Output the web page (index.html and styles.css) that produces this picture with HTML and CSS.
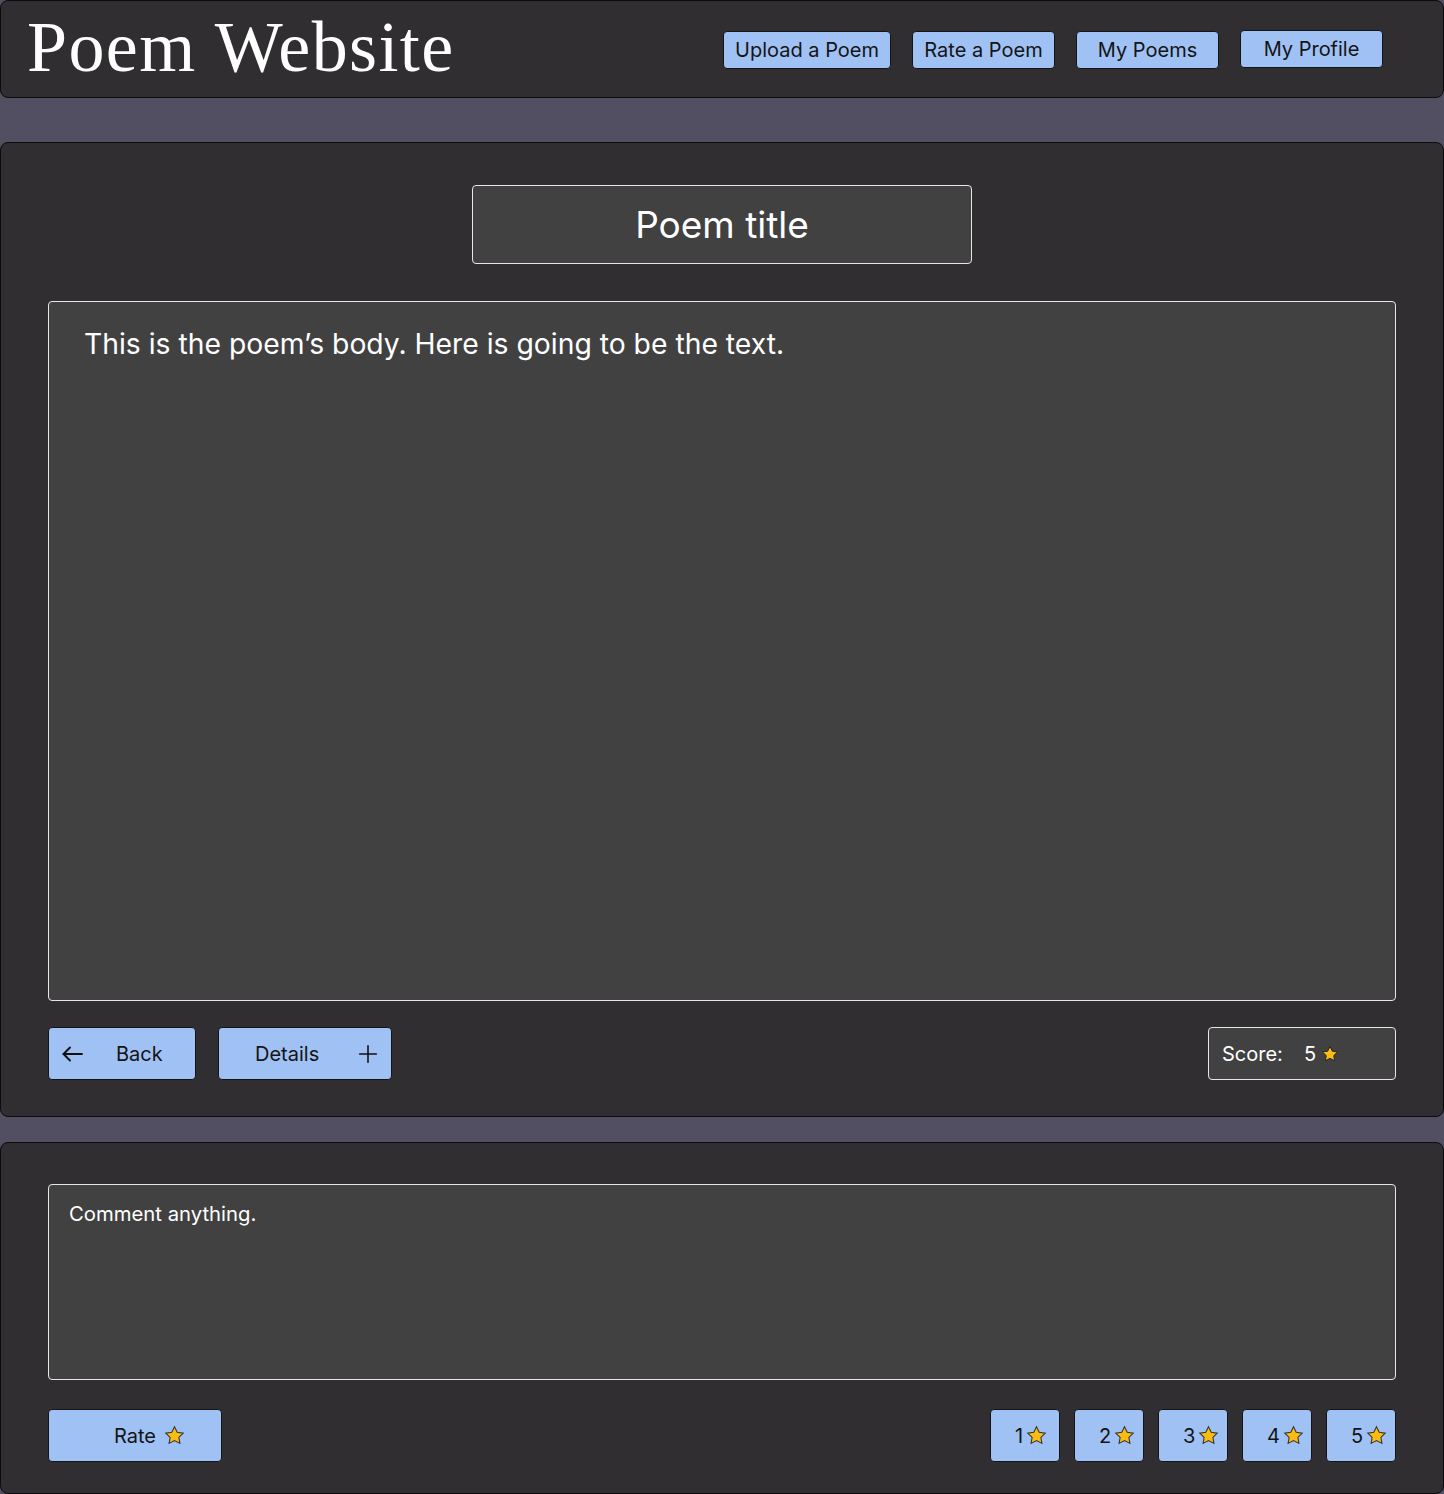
FILE: index.html
```html
<!DOCTYPE html>
<html>
<head>
<meta charset="utf-8">
<link rel="stylesheet" href="styles.css">
</head>
<body>
<header class="header">
  <h1 class="logo">Poem Website</h1>
  <nav class="nav">
    <a class="nav-btn nav-btn-wide">Upload a Poem</a>
    <a class="nav-btn">Rate a Poem</a>
    <a class="nav-btn">My Poems</a>
    <a class="nav-btn nav-btn-up">My Profile</a>
  </nav>
</header>

<section class="card poem-card">
  <div class="title-box">Poem title</div>
  <div class="body-box">This is the poem’s body. Here is going to be the text.</div>
  <div class="action-row">
    <div class="left-actions">
      <button class="btn back-btn">
        <svg class="icon" width="24" height="24" viewBox="0 0 24 24" fill="none" stroke="#111" stroke-width="1.9" stroke-linecap="round" stroke-linejoin="round"><path d="M21 12H2.5"/><path d="M9 5.5l-6.5 6.5 6.5 6.5"/></svg>
        <span class="back-label">Back</span>
      </button>
      <button class="btn details-btn">
        <span>Details</span>
        <svg class="icon" width="20" height="20" viewBox="0 0 24 24" fill="none" stroke="#111" stroke-width="1.9" stroke-linecap="round"><path d="M12 2v20"/><path d="M2 12h20"/></svg>
      </button>
    </div>
    <div class="score-box">
      <span class="score-label">Score:</span>
      <span class="score-val">5</span>
      <svg class="star" width="18" height="18" viewBox="0 0 24 24"><polygon points="12,2 15.09,8.26 22,9.27 17,14.14 18.18,21.02 12,17.77 5.82,21.02 7,14.14 2,9.27 8.91,8.26" fill="#fbbc12" stroke="#222" stroke-width="1.3"/></svg>
    </div>
  </div>
</section>

<section class="card comment-card">
  <div class="comment-box">Comment anything.</div>
  <div class="rate-row">
    <button class="btn rate-btn">
      <span>Rate</span>
      <svg class="star" width="21" height="21" viewBox="0 0 24 24"><polygon points="12,2 15.09,8.26 22,9.27 17,14.14 18.18,21.02 12,17.77 5.82,21.02 7,14.14 2,9.27 8.91,8.26" fill="#fbbc12" stroke="#333" stroke-width="1.2"/></svg>
    </button>
    <div class="stars-group">
      <button class="btn num-btn"><span>1</span><svg class="star" width="21" height="21" viewBox="0 0 24 24"><polygon points="12,2 15.09,8.26 22,9.27 17,14.14 18.18,21.02 12,17.77 5.82,21.02 7,14.14 2,9.27 8.91,8.26" fill="#fbbc12" stroke="#333" stroke-width="1.2"/></svg></button>
      <button class="btn num-btn"><span>2</span><svg class="star" width="21" height="21" viewBox="0 0 24 24"><polygon points="12,2 15.09,8.26 22,9.27 17,14.14 18.18,21.02 12,17.77 5.82,21.02 7,14.14 2,9.27 8.91,8.26" fill="#fbbc12" stroke="#333" stroke-width="1.2"/></svg></button>
      <button class="btn num-btn"><span>3</span><svg class="star" width="21" height="21" viewBox="0 0 24 24"><polygon points="12,2 15.09,8.26 22,9.27 17,14.14 18.18,21.02 12,17.77 5.82,21.02 7,14.14 2,9.27 8.91,8.26" fill="#fbbc12" stroke="#333" stroke-width="1.2"/></svg></button>
      <button class="btn num-btn"><span>4</span><svg class="star" width="21" height="21" viewBox="0 0 24 24"><polygon points="12,2 15.09,8.26 22,9.27 17,14.14 18.18,21.02 12,17.77 5.82,21.02 7,14.14 2,9.27 8.91,8.26" fill="#fbbc12" stroke="#333" stroke-width="1.2"/></svg></button>
      <button class="btn num-btn"><span>5</span><svg class="star" width="21" height="21" viewBox="0 0 24 24"><polygon points="12,2 15.09,8.26 22,9.27 17,14.14 18.18,21.02 12,17.77 5.82,21.02 7,14.14 2,9.27 8.91,8.26" fill="#fbbc12" stroke="#333" stroke-width="1.2"/></svg></button>
    </div>
  </div>
</section>
</body>
</html>
```
FILE: styles.css
```css
* { box-sizing: border-box; }

html, body {
  margin: 0;
  padding: 0;
}

body {
  background: #514f61;
  font-family: Inter, "Noto Sans", sans-serif;
  color: #fff;
  width: 1444px;
}

.header {
  height: 98px;
  background: #302e30;
  border: 1px solid #0c0c0c;
  border-radius: 8px;
  display: flex;
  align-items: center;
  justify-content: space-between;
  padding: 0 60px 0 26px;
}

.logo {
  margin: 0;
  font-family: "Liberation Serif", "DejaVu Serif", serif;
  font-weight: 400;
  font-size: 72px;
  line-height: 1;
  color: #fff;
  letter-spacing: 1.4px;
  margin-top: -4px;
}

.nav {
  display: flex;
  gap: 21px;
  align-items: center;
  margin-top: 2px;
}

.nav-btn {
  display: flex;
  align-items: center;
  justify-content: center;
  height: 38px;
  width: 143px;
  padding: 0 11px;
  background: #a0c1f4;
  border: 1px solid #151515;
  border-radius: 4px;
  color: #141414;
  font-size: 20px;
}

.nav-btn-wide { width: 168px; }
.nav-btn-up { margin-top: -2px; }

.card {
  background: #302e30;
  border: 1px solid #0c0c0c;
  border-radius: 8px;
  padding: 0 47px;
}

.poem-card {
  margin-top: 44px;
  padding-top: 42px;
  padding-bottom: 36px;
}

.title-box {
  width: 500px;
  height: 79px;
  margin: 0 auto;
  background: #414141;
  border: 1px solid #e6e6e6;
  border-radius: 4px;
  display: flex;
  align-items: center;
  justify-content: center;
  font-size: 37px;
  color: #fff;
}

.body-box {
  margin-top: 37px;
  height: 700px;
  background: #414141;
  border: 1px solid #e6e6e6;
  border-radius: 4px;
  padding: 25px 35px;
  font-size: 28.3px;
  color: #fff;
}

.action-row {
  margin-top: 26px;
  display: flex;
  justify-content: space-between;
  align-items: center;
}

.left-actions {
  display: flex;
  gap: 22px;
}

.btn {
  height: 53px;
  background: #a0c1f4;
  border: 1px solid #151515;
  border-radius: 4px;
  color: #141414;
  font-family: Inter, "Noto Sans", sans-serif;
  font-size: 20px;
  display: flex;
  align-items: center;
  padding: 0;
  margin: 0;
}

.back-btn {
  width: 148px;
  padding-left: 12px;
}

.back-label {
  margin-left: 31px;
}

.details-btn {
  width: 174px;
  padding: 0 13px 0 36px;
  justify-content: space-between;
}

.icon { display: block; }

.score-box {
  width: 188px;
  height: 53px;
  background: #414141;
  border: 1px solid #e6e6e6;
  border-radius: 4px;
  display: flex;
  align-items: center;
  padding-left: 13px;
  font-size: 20px;
  color: #fff;
}

.score-label { margin-right: 21px; }
.score-val { margin-right: 5px; }

.star { display: block; }

.comment-card {
  margin-top: 25px;
  padding-top: 41px;
  padding-bottom: 31px;
}

.comment-box {
  height: 196px;
  background: #414141;
  border: 1px solid #e6e6e6;
  border-radius: 4px;
  padding: 16px 20px;
  font-size: 20.3px;
  color: #fff;
}

.rate-row {
  margin-top: 29px;
  display: flex;
  justify-content: space-between;
}

.rate-btn {
  width: 174px;
  padding-left: 65px;
  gap: 8px;
}

.stars-group {
  display: flex;
  gap: 14px;
}

.num-btn {
  width: 70px;
  padding-left: 24px;
  gap: 3px;
}
```
